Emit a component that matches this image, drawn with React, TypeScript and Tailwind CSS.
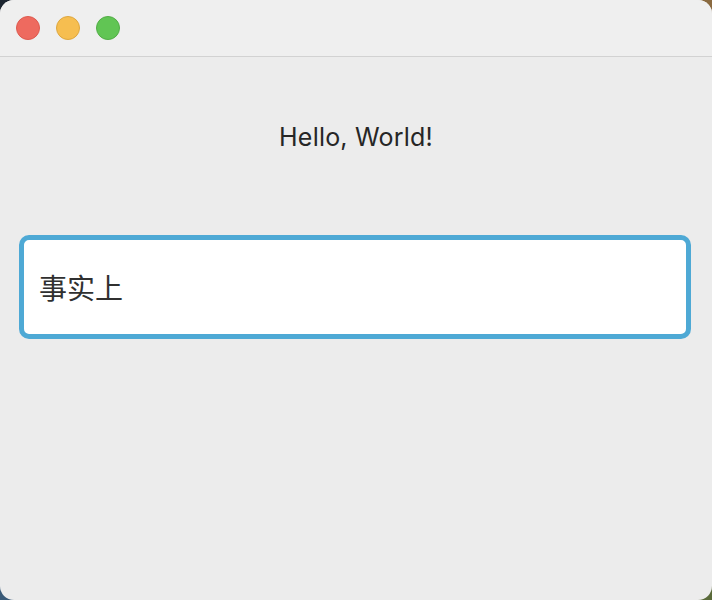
export default function App() {
  return (
    <div className="h-[600px] w-[712px] bg-[conic-gradient(from_0deg,#8a6a40_0deg_90deg,#5a6a3a_90deg_180deg,#3a5a78_180deg_270deg,#1c2530_270deg_360deg)]">
      <div className="flex h-full w-full flex-col overflow-hidden rounded-[14px] bg-[#ececec]">
        {/* title bar */}
        <div className="flex h-[57px] shrink-0 items-center gap-4 border-b border-[#d2d2d2] bg-[#efefef] pl-4">
          <span className="h-6 w-6 rounded-full border border-[#de5a4f] bg-[#ee6a5f]" />
          <span className="h-6 w-6 rounded-full border border-[#dea73f] bg-[#f6be50]" />
          <span className="h-6 w-6 rounded-full border border-[#52ad46] bg-[#61c554]" />
        </div>

        <div className="flex flex-col">
          <p className="mt-[65px] text-center font-['Inter',sans-serif] text-[25px] leading-[30px] tracking-[0.2px] text-[#262626]">
            Hello, World!
          </p>
          <div className="ml-[19px] mt-[83px] flex h-[104px] w-[672px] items-center rounded-[10px] border-[5px] border-[#4ea9d5] bg-white pl-[15px]">
            <span className="font-['Noto_Sans_CJK_SC',sans-serif] text-[28px] leading-[34px] text-[#303030]">
              事实上
            </span>
          </div>
        </div>
      </div>
    </div>
  )
}
